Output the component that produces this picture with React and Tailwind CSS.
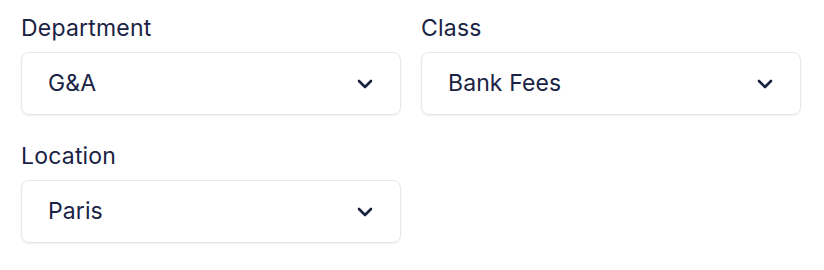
import React from "react";

function Chevron() {
  return (
    <svg width="16" height="10" viewBox="0 0 16 10" fill="none" className="shrink-0">
      <path d="M2 2L8 8L14 2" stroke="#18223f" strokeWidth="2.6" strokeLinecap="round" strokeLinejoin="round" />
    </svg>
  );
}

function Field({ label, value }) {
  return (
    <div className="flex flex-col">
      <div className="text-[23px] leading-[32px] tracking-[0.2px] text-[#1a2344] mb-2">{label}</div>
      <div className="h-[63px] flex items-center justify-between pl-[26px] pr-[27px] bg-white border border-[#e5e7eb] rounded-[8px] shadow-[0_1px_2px_rgba(0,0,0,0.06)]">
        <span className="text-[23px] tracking-[0.1px] text-[#1a2344]">{value}</span>
        <Chevron />
      </div>
    </div>
  );
}

export default function App() {
  return (
    <div
      className="w-[824px] h-[270px] bg-white pt-[12px] pl-[21px] pr-[23px]"
      style={{ fontFamily: "Inter, 'Noto Sans', sans-serif" }}
    >
      <div className="grid grid-cols-2 gap-x-[20px] gap-y-[25px]">
        <Field label="Department" value="G&A" />
        <Field label="Class" value="Bank Fees" />
        <Field label="Location" value="Paris" />
      </div>
    </div>
  );
}
